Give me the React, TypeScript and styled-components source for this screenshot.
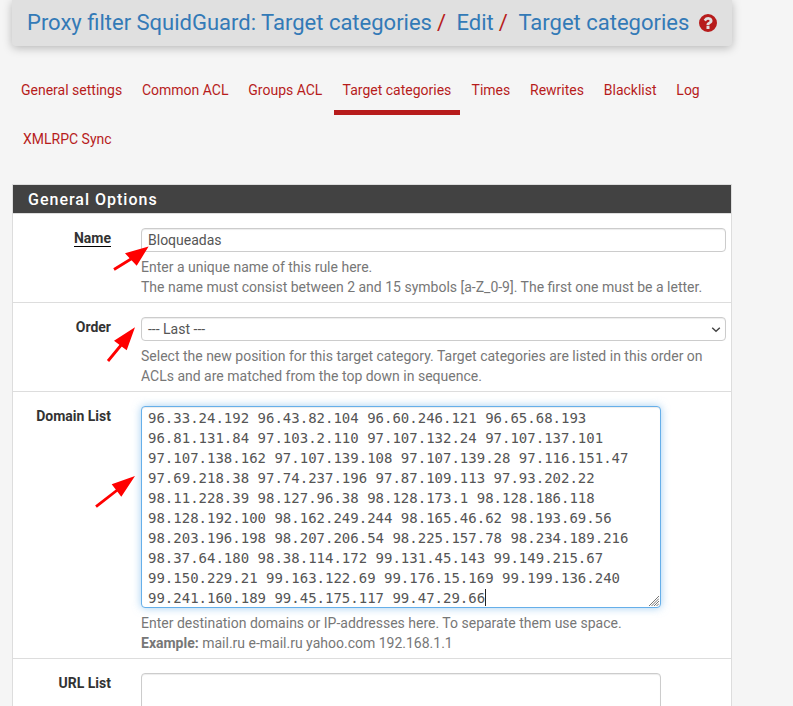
import React from "react";
import styled, { createGlobalStyle, css } from "styled-components";

const GlobalStyle = createGlobalStyle`
  * { box-sizing: border-box; }
  html, body { margin: 0; height: 706px; overflow: hidden; }
  body {
    background: #f5f5f5;
    font: 14px/20px Roboto, "Liberation Sans", sans-serif;
    color: #333;
  }
`;

const Page = styled.main`
  position: relative;
  width: 793px;
  height: 706px;
  padding: 0 61px 0 12px;
  overflow: hidden;
`;

const Header = styled.header`
  display: flex;
  align-items: center;
  height: 46px;
  padding: 0 15px;
  background: #e0e0e0;
  border-radius: 0 0 4px 4px;
  box-shadow: 0 2px 10px rgba(0, 0, 0, 0.26);
  font-size: 22px;
  line-height: 24px;
  color: #b71c1c;
  white-space: nowrap;
`;

const Crumb = styled.a<{ $gap?: number }>`
  color: #337ab7;
  margin-left: ${({ $gap = 0 }) => $gap}px;
`;

const Slash = styled.span`
  margin-left: 5px;
`;

const HelpIcon = styled.svg`
  width: 18px;
  height: 18px;
  flex: none;
  margin-left: 10px;
`;

const Tabs = styled.nav`
  display: flex;
  flex-wrap: wrap;
  column-gap: 3.8px;
  padding-top: 29px;
  padding-left: 1px;
  height: 138px;
  align-content: flex-start;
`;

const Tab = styled.a<{ $active?: boolean; $indent?: number }>`
  height: 40px;
  padding: 5px ${({ $active }) => ($active ? 8.4 : 8)}px 0;
  margin-bottom: 9px;
  margin-left: ${({ $indent = 0 }) => $indent}px;
  color: #b71c1c;
  border-bottom: 5px solid ${({ $active }) => ($active ? "#b71c1c" : "transparent")};
`;

const Panel = styled.section`
  height: 560px;
  background: #fff;
  border: 1px solid #ddd;
`;

const PanelTitle = styled.h2`
  height: 29px;
  margin: 0;
  padding: 1px 15px 0;
  background: #424242;
  border-bottom: 1px solid #ddd;
  color: #fff;
  font-size: 16px;
  font-weight: 500;
  line-height: 27px;
  letter-spacing: 1px;
`;

const Row = styled.div`
  display: grid;
  grid-template-columns: 98px 585px;
  column-gap: 30px;
  padding: 14px 0 5px;
  border-bottom: 1px solid #ddd;
`;

const Label = styled.label`
  font-weight: 700;
  text-align: right;
`;

const Required = styled.span`
  display: inline-block;
  height: 19px;
  border-bottom: 1px solid #000;
`;

const control = css`
  display: block;
  width: 100%;
  margin: 0;
  border: 1px solid #ccc;
  border-radius: 4px;
  background: #fff;
  box-shadow: inset 0 1px 1px rgba(0, 0, 0, 0.075);
  color: #555;
  outline: none;
`;

const Input = styled.input`
  ${control}
  height: 24px;
  padding: 0 6px;
  font: inherit;
`;

const Select = styled.div`
  ${control}
  display: flex;
  align-items: center;
  justify-content: space-between;
  height: 24px;
  padding: 0 4px 0 6px;
`;

const AreaWrap = styled.div`
  position: relative;
  width: 520px;
  height: 202px;
`;

const Area = styled.textarea<{ $focused?: boolean }>`
  ${control}
  height: 202px;
  padding: 1px 6px 0;
  resize: none;
  overflow: hidden;
  white-space: pre;
  font: 14px/20px "DejaVu Sans Mono", monospace;
  ${({ $focused }) =>
    $focused &&
    css`
      border-color: #66afe9;
      box-shadow: inset 0 1px 1px rgba(0, 0, 0, 0.075), 0 0 8px rgba(102, 175, 233, 0.6);
    `}
`;

const Caret = styled.i`
  position: absolute;
  right: 175px;
  bottom: 2px;
  width: 1px;
  height: 17px;
  background: #222;
`;

const Grip = styled.svg`
  position: absolute;
  right: 2px;
  bottom: 2px;
`;

const Help = styled.div`
  margin-top: 5px;
  color: #777;
  white-space: nowrap;
`;

const Arrows = styled.svg`
  position: absolute;
  inset: 0;
  pointer-events: none;
`;

const tabs = [
  "General settings",
  "Common ACL",
  "Groups ACL",
  "Target categories",
  "Times",
  "Rewrites",
  "Blacklist",
  "Log",
  "XMLRPC Sync",
];

const domains = `96.33.24.192 96.43.82.104 96.60.246.121 96.65.68.193
96.81.131.84 97.103.2.110 97.107.132.24 97.107.137.101
97.107.138.162 97.107.139.108 97.107.139.28 97.116.151.47
97.69.218.38 97.74.237.196 97.87.109.113 97.93.202.22
98.11.228.39 98.127.96.38 98.128.173.1 98.128.186.118
98.128.192.100 98.162.249.244 98.165.46.62 98.193.69.56
98.203.196.198 98.207.206.54 98.225.157.78 98.234.189.216
98.37.64.180 98.38.114.172 99.131.45.143 99.149.215.67
99.150.229.21 99.163.122.69 99.176.15.169 99.199.136.240
99.241.160.189 99.45.175.117 99.47.29.66`;

export default function App() {
  return (
    <Page>
      <GlobalStyle />
      <Header>
        <Crumb>Proxy filter SquidGuard: Target categories</Crumb>
        <Slash>/</Slash>
        <Crumb $gap={10.5}>Edit</Crumb>
        <Slash>/</Slash>
        <Crumb $gap={10.5}>Target categories</Crumb>
        <HelpIcon viewBox="128 128 1536 1536" fill="currentColor">
          <path
            fillRule="evenodd"
            d="M896 128a768 768 0 1 0 0 1536 768 768 0 1 0 0-1536zM1024 1376v-192q0-14-9-23t-23-9h-192q-14 0-23 9t-9 23v192q0 14 9 23t23 9h192q14 0 23-9t9-23zm256-672q0-88-55.5-163t-138.5-116-170-41q-243 0-371 213-15 24 8 42l132 100q7 6 19 6 16 0 25-12 53-68 86-92 34-24 86-24 48 0 85.5 26t37.5 59q0 38-20 61t-68 45q-63 28-115.5 86.5t-52.5 125.5v36q0 14 9 23t23 9h192q14 0 23-9t9-23q0-19 21.5-49.5t54.5-49.5q32-18 49-28.5t46-35 44.5-48 28-60.5 12.5-81z"
          />
        </HelpIcon>
      </Header>
      <Tabs>
        {tabs.map((t) => (
          <Tab key={t} $active={t === "Target categories"} $indent={t === "XMLRPC Sync" ? 2 : 0}>
            {t}
          </Tab>
        ))}
      </Tabs>
      <Panel>
        <PanelTitle>General Options</PanelTitle>
        <Row>
          <Label>
            <Required>Name</Required>
          </Label>
          <div>
            <Input defaultValue="Bloqueadas" />
            <Help>
              Enter a unique name of this rule here.
              <br />
              The name must consist between 2 and 15 symbols [a-Z_0-9]. The first one must be a letter.
            </Help>
          </div>
        </Row>
        <Row>
          <Label>Order</Label>
          <div>
            <Select>
              --- Last ---
              <svg width="10" height="8" viewBox="0 0 10 8" fill="none" stroke="#444" strokeWidth="1.4">
                <path d="M1.2 2.7 5 6.3 8.8 2.7" />
              </svg>
            </Select>
            <Help>
              Select the new position for this target category. Target categories are listed in this order on
              <br />
              ACLs and are matched from the top down in sequence.
            </Help>
          </div>
        </Row>
        <Row>
          <Label>Domain List</Label>
          <div>
            <AreaWrap>
              <Area $focused defaultValue={domains} spellCheck={false} />
              <Caret />
              <Grip width="10" height="10" viewBox="0 0 10 10" stroke="#666" strokeWidth="0.9">
                <path d="M0 10 10 0M2.5 10 10 2.5M5 10 10 5M7.5 10 10 7.5" />
              </Grip>
            </AreaWrap>
            <Help>
              Enter destination domains or IP-addresses here. To separate them use space.
              <br />
              <b>Example:</b> mail.ru e-mail.ru yahoo.com 192.168.1.1
            </Help>
          </div>
        </Row>
        <Row>
          <Label>URL List</Label>
          <AreaWrap>
            <Area />
          </AreaWrap>
        </Row>
      </Panel>
      <Arrows width="793" height="706" fill="#f00" stroke="#f00" strokeWidth="2.8">
        <path d="M114 269.5 133 257.8M108 361 122 344M96 506.7 118 489.5" />
        <path
          stroke="none"
          d="M148.6 246.6 125 253.3 136.7 265.7ZM135 327.3 114 340.7 126.7 350.3ZM135 476 111.7 484.3 121.3 496.7Z"
        />
      </Arrows>
    </Page>
  );
}
